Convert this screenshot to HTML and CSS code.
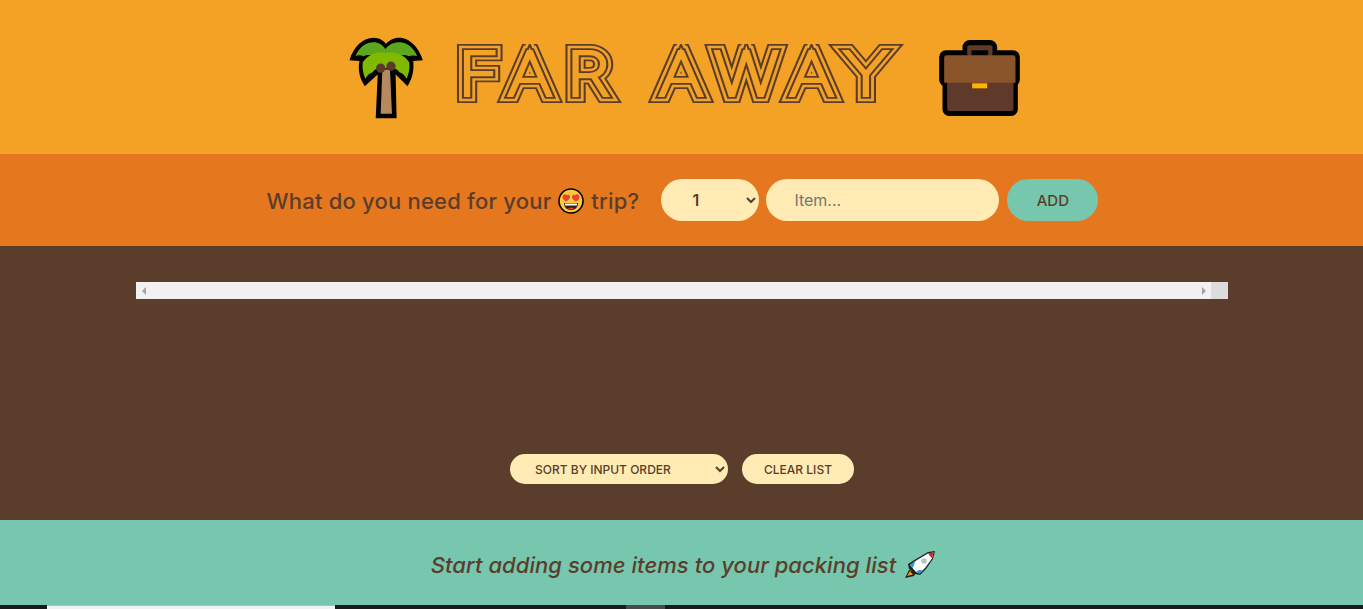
FILE: index.html
```html
<!DOCTYPE html>
<html lang="en">
<head>
    <meta charset="UTF-8">
    <title>Far Away</title>
    <link rel="stylesheet" href="styles.css">
</head>
<body>
    <div class="app">
        <header class="header">
            <svg class="palm" viewBox="57 52 222 250" aria-hidden="true">
                <path fill="#000" d="M58 122C70 80 100 54 130 54C148 54 160 63 168 72C178 62 190 54 208 54C240 54 268 85 279 122L250 124C253 150 248 175 233 200L197 165L200 297L137 297L143 165L104 200C88 175 83 150 88 124Z"/>
                <path fill="#5da61f" d="M76 110C86 85 105 68 130 68C146 68 158 76 166 88C176 76 190 68 208 68C232 68 252 85 262 110C252 106 244 108 236 110C226 104 216 106 206 110L130 110C120 104 110 106 100 110C92 106 84 106 76 110Z"/>
                <path fill="#7fb900" d="M168 100C190 92 225 105 238 128C240 145 238 160 230 178C224 166 216 160 208 158C204 150 196 146 188 146L150 146C140 146 132 150 128 158C120 160 112 166 106 178C98 160 96 145 98 128C112 105 146 92 168 100Z"/>
                <path fill="#b58a5f" d="M157 150L180 150L186 283L152 283Z"/>
                <circle fill="#5c3a2a" cx="152" cy="146" r="14"/>
                <circle fill="#5c3a2a" cx="183" cy="140" r="14"/>
            </svg>
            <div class="title-clip">
                <h1 class="title" data-text="Far Away"><span class="title-inner" data-text="Far Away">Far Away</span></h1>
            </div>
            <svg class="case" viewBox="778 62 242 228" aria-hidden="true">
                <rect fill="#000" x="848" y="62" width="104" height="60" rx="22"/>
                <rect fill="#000" x="778" y="93" width="242" height="108" rx="20"/>
                <rect fill="#000" x="788" y="170" width="226" height="120" rx="20"/>
                <rect fill="#5f3a2b" x="862" y="78" width="76" height="32" rx="6"/>
                <rect fill="#000" x="875" y="93" width="50" height="17"/>
                <path fill="#5f3a2b" d="M802 185H1001V268Q1001 275 994 275H809Q802 275 802 268Z"/>
                <path fill="#8b552c" d="M793 115Q793 108 800 108H1000Q1007 108 1007 115V190H793Z"/>
                <rect fill="#ffb400" x="877" y="192" width="45" height="15"/>
            </svg>
        </header>

        <form class="add-form">
            <h3 class="add-label">What do you need for your
                <svg class="emoji" viewBox="0 0 26 26" aria-hidden="true">
                    <circle cx="13" cy="13" r="12" fill="#ffc83d" stroke="#000" stroke-width="1.6"/>
                    <path fill="#e8452f" d="M4.5 9C4.5 6 8 5.5 9 7.5C10 5.5 12 6.5 12 9C12 11 9.5 12.5 8 13.5C6.5 12.5 4.5 11 4.5 9Z"/>
                    <path fill="#e8452f" d="M14 9C14 6.5 16 5.5 17 7.5C18 5.5 21.5 6 21.5 9C21.5 11 19.5 12.5 18 13.5C16.500 12.5 14 11 14 9Z"/>
                    <path fill="#3a1f14" d="M6 15H20C20 19.500 17 22 13 22C9 22 6 19.500 6 15Z"/>
                    <path fill="#fff" d="M7 15.500H19V17.500H7Z"/>
                    <path fill="#e8452f" d="M10 20.500C11 19.500 15 19.500 16 20.500C15 21.500 11 21.500 10 20.500Z"/>
                </svg>
                trip?</h3>
            <div class="add-controls">
                <select class="pill qty-select">
                    <option>1</option>
                    <option>2</option>
                    <option>3</option>
                </select>
                <input class="pill item-input" type="text" placeholder="Item...">
                <button class="pill add-btn" type="button">ADD</button>
            </div>
        </form>

        <main class="list">
            <div class="fake-scroll">
                <div class="scroll-track">
                    <span class="arrow arrow-left"></span>
                    <span class="arrow arrow-right"></span>
                </div>
                <div class="scroll-corner"></div>
            </div>
            <div class="actions">
                <select class="pill sort-select">
                    <option>SORT BY INPUT ORDER</option>
                    <option>SORT BY DESCRIPTION</option>
                    <option>SORT BY PACKED STATUS</option>
                </select>
                <button class="pill clear-btn" type="button">CLEAR LIST</button>
            </div>
        </main>

        <footer class="stats">
            <em>Start adding some items to your packing list</em>
            <svg class="emoji rocket" viewBox="0 0 32 28" aria-hidden="true">
                <path fill="#1c1c1c" d="M5 19L1 27L10 25L12 21Z"/>
                <path fill="#f7941d" d="M6 20L3 25L9 23.500Z"/>
                <path fill="#222" d="M4 13L12 8L24 1L31 0L29 8L22 18L16 24L11 23L8 20L5 18Z"/>
                <path fill="#fff" d="M6 14L13 9L24 2.500L29.500 1.500L28 7.500L21 17L15.500 22.500L12 21L8.500 17Z"/>
                <path fill="#d8232a" d="M24 2.500L29.500 1.500L28 7.500Z"/>
                <circle fill="#b9c4c9" cx="20" cy="10" r="2.800"/>
                <path fill="#1d9bd7" d="M6 14L11 10L10 14L8.500 17Z"/>
                <path fill="#1d9bd7" d="M15.500 22.500L19 19.500L15 19L12 21Z"/>
            </svg>
        </footer>

        <div class="page-end">
            <div class="end-white"></div>
            <div class="end-gray"></div>
        </div>
    </div>
</body>
</html>
```

FILE: styles.css
```css
* {
    margin: 0;
    padding: 0;
    box-sizing: border-box;
}
body {
    font-family: Inter, "Noto Sans", sans-serif;
    color: #5a3e2b;
    overflow: hidden;
}
.app {
    height: 609px;
    display: flex;
    flex-direction: column;
}

.header {
    height: 154px;
    background-color: #f4a226;
    display: flex;
    justify-content: center;
    align-items: center;
    padding-left: 5px;
}
.palm {
    width: 74px;
    height: 83px;
    margin-top: 3px;
}
.case {
    width: 81px;
    height: 76px;
    margin-top: 2px;
}
.title-clip {
    width: 449px;
    height: 60px;
    margin: 0 35px 6px 32px;
    clip-path: inset(0 -10px);
}
.title {
    position: relative;
    font-size: 59px;
    font-weight: 100;
    line-height: 60px;
    letter-spacing: 12.9px;
    text-transform: uppercase;
    white-space: nowrap;
    color: #f4a226;
    padding-left: 3px;
    transform: scaleX(1.17);
    transform-origin: left center;
}
.title::before,
.title::after,
.title-inner::before {
    content: attr(data-text);
    position: absolute;
    left: 3px;
    top: 0;
}
.title-inner::before {
    left: 0;
}
.title::before {
    -webkit-text-stroke: 16px #5a3e2b;
}
.title::after {
    -webkit-text-stroke: 12.4px #f4a226;
}
.title-inner {
    display: block;
    position: relative;
    z-index: 1;
    -webkit-text-stroke: 7.6px #5a3e2b;
}
.title-inner::before {
    -webkit-text-stroke: 4px #f4a226;
}

.add-form {
    height: 92px;
    background-color: #e5771f;
    display: flex;
    justify-content: center;
    align-items: center;
    gap: 22px;
    padding-left: 2px;
}
.add-label {
    font-size: 22px;
    font-weight: 500;
    letter-spacing: 0.2px;
    display: flex;
    align-items: center;
    gap: 7px;
    margin-top: 2px;
}
.emoji {
    width: 26px;
    height: 26px;
    flex: none;
}
.add-controls {
    display: flex;
    align-items: center;
}
.pill {
    border: none;
    border-radius: 100px;
    background-color: #ffebb3;
    color: #5a3e2b;
    font-family: Inter, "Noto Sans", sans-serif;
    font-weight: 600;
}
.qty-select {
    width: 98px;
    height: 42px;
    font-size: 16px;
    padding-left: 27px;
    margin-right: 7px;
}
.item-input {
    width: 233px;
    height: 42px;
    font-size: 16px;
    font-weight: 400;
    padding-left: 28px;
    margin-right: 8px;
}
.item-input::placeholder {
    color: #757575;
}
.add-btn {
    width: 91px;
    height: 42px;
    font-size: 15px;
    font-weight: 500;
    background-color: #76c7ad;
}

.list {
    height: 274px;
    background-color: #5a3e2b;
    padding: 36px 135px 36px 136px;
    display: flex;
    flex-direction: column;
    justify-content: space-between;
    align-items: stretch;
}
.fake-scroll {
    height: 17px;
    display: flex;
}
.scroll-track {
    flex: 1;
    background-color: #f1f1f1;
    display: flex;
    justify-content: space-between;
    align-items: center;
    padding: 0 5px 0 6px;
}
.scroll-corner {
    width: 17px;
    background-color: #dcdcdc;
}
.arrow {
    width: 0;
    height: 0;
    border-top: 4px solid transparent;
    border-bottom: 4px solid transparent;
}
.arrow-left {
    border-right: 4px solid #a3a3a3;
}
.arrow-right {
    border-left: 4px solid #a3a3a3;
}
.actions {
    display: flex;
    justify-content: center;
    gap: 14px;
}
.sort-select {
    width: 218px;
    height: 30px;
    font-size: 12px;
    font-weight: 500;
    padding: 1px 0 0 21px;
}
.clear-btn {
    width: 112px;
    height: 30px;
    font-size: 12px;
    font-weight: 500;
    padding-top: 1px;
}

.stats {
    height: 85px;
    background-color: #76c7ad;
    display: flex;
    justify-content: center;
    align-items: center;
    gap: 8px;
    font-size: 22px;
    font-weight: 500;
    letter-spacing: 0.05px;
    padding: 5px 0 0 4px;
}
.rocket {
    width: 32px;
    height: 28px;
}

.page-end {
    flex: 1;
    background-color: #1a1a1a;
    display: flex;
    padding-left: 47px;
}
.end-white {
    width: 288px;
    background-color: #f1f1f1;
    border-top: 1px solid #bbb;
}
.end-gray {
    width: 39px;
    margin-left: 291px;
    background-color: #4a4a4a;
}
```
